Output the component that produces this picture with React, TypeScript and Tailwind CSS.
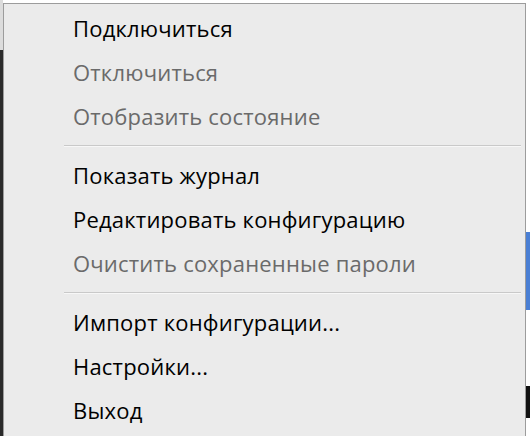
import React from 'react';

type Item = { label: string; disabled?: boolean } | 'sep';

const items: Item[] = [
  { label: 'Подключиться' },
  { label: 'Отключиться', disabled: true },
  { label: 'Отобразить состояние', disabled: true },
  'sep',
  { label: 'Показать журнал' },
  { label: 'Редактировать конфигурацию' },
  { label: 'Очистить сохраненные пароли', disabled: true },
  'sep',
  { label: 'Импорт конфигурации...' },
  { label: 'Настройки...' },
  { label: 'Выход' },
];

export default function App() {
  return (
    <div className="flex w-[530px] h-[436px] bg-white overflow-hidden" style={{ fontFamily: '"Open Sans", "Noto Sans", sans-serif' }}>
      <div className="flex flex-col w-[3px] shrink-0">
        <div className="h-[50px] bg-[#dcdcdc]" />
        <div className="flex-1 bg-[#2a2a2a]" />
      </div>
      <div className="w-[523px] shrink-0 mt-[3px] h-[440px] bg-[#ebebeb] border border-[#9c9c9c] pt-[2px]">
        {items.map((it, i) =>
          it === 'sep' ? (
            <div key={i} className="pt-[7px] pb-[6px] pl-[60px] pr-[4px]">
              <div className="h-[2px] border-t border-[#c9c9c9] border-b border-b-[#f7f7f7]" />
            </div>
          ) : (
            <div
              key={i}
              className={`h-[44px] flex items-center pl-[69px] text-[22px] tracking-[0.2px] ${it.disabled ? 'text-[#6a6a6a]' : 'text-black font-medium'}`}
            >
              {it.label}
            </div>
          )
        )}
      </div>
      <div className="flex flex-col flex-1 bg-white">
        <div className="h-[232px]" />
        <div className="h-[78px] bg-[#4a7fd4]" />
        <div className="h-[76px]" />
        <div className="h-[32px] bg-[#111111]" />
        <div className="flex-1" />
      </div>
    </div>
  );
}
